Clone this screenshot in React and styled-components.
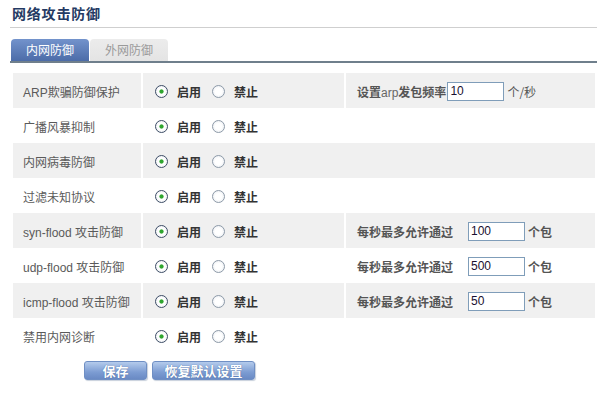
import React from "react";
import styled, {createGlobalStyle} from "styled-components";

const GlobalStyle = createGlobalStyle`
body {
    margin: 0;
    background: #fff;
    font-family: "Liberation Sans", "Noto Sans CJK SC", sans-serif;
    font-size: 12px;
}
`

const rows = [
    {label: "ARP欺骗防御保护", extra: {arp: true, value: "10", post: "个/秒"}},
    {label: "广播风暴抑制"},
    {label: "内网病毒防御"},
    {label: "过滤未知协议"},
    {label: "syn-flood 攻击防御", extra: {pre: "每秒最多允许通过", value: "100", post: "个包"}},
    {label: "udp-flood 攻击防御", extra: {pre: "每秒最多允许通过", value: "500", post: "个包"}},
    {label: "icmp-flood 攻击防御", extra: {pre: "每秒最多允许通过", value: "50", post: "个包"}},
    {label: "禁用内网诊断"}
];

const App = () => {

    const [tab, setTab] = React.useState(0);

    return (
        <React.Fragment>
            <GlobalStyle/>
            <Page>
                <Title>网络攻击防御</Title>
                <Tabs>
                    <Tab $active={tab === 0} onClick={() => setTab(0)}>内网防御</Tab>
                    <Tab $active={tab === 1} onClick={() => setTab(1)}>外网防御</Tab>
                </Tabs>
                <Table>
                    {
                        rows.map((row, i) => (
                            <Row key={i} $shaded={i % 2 === 0}>
                                <Cell>{row.label}</Cell>
                                <Cell $wide={!row.extra}>
                                    <Radio type="radio" name={"r" + i} defaultChecked/>
                                    <Choice>启用</Choice>
                                    <Radio type="radio" name={"r" + i}/>
                                    <Choice>禁止</Choice>
                                </Cell>
                                {
                                    row.extra
                                        ? <Cell>
                                                {
                                                    row.extra.arp
                                                        ? <Strong>设置<Thin>arp</Thin>发包频率</Strong>
                                                        : <Strong>{row.extra.pre}</Strong>
                                                }
                                                <Field $tight={row.extra.arp} defaultValue={row.extra.value}/>
                                                <Unit $light={row.extra.arp}>{row.extra.post}</Unit>
                                            </Cell>
                                        : null
                                }
                            </Row>
                        ))
                    }
                </Table>
                <Buttons>
                    <Button $w={63}>保存</Button>
                    <Button $w={103}>恢复默认设置</Button>
                </Buttons>
            </Page>
        </React.Fragment>
    )
}

const Page = styled.div `
width: 603px;
height: 396px;
padding: 5px 6px 0 10px;
box-sizing: border-box;
`
const Title = styled.h1 `
margin: 0;
padding: 0 0 6px 2px;
height: 16px;
line-height: 16px;
font-size: 14px;
letter-spacing: 0.8px;
font-weight: 700;
color: #243a63;
font-family: "Noto Sans CJK SC", sans-serif;
border-bottom: 1px solid #cfcfcf;
`
const Tabs = styled.div `
display: flex;
gap: 1px;
margin-top: 11px;
padding-left: 1px;
border-bottom: 2px solid #6f7f8c;
`
const Tab = styled.div `
width: 78px;
height: 22px;
line-height: 22px;
text-align: center;
font-size: 12px;
font-family: "Noto Sans CJK SC", sans-serif;
border-radius: 4px 4px 0 0;
cursor: pointer;
color: ${props => props.$active ? "#fff" : "#9a9a9a"};
background: ${props => props.$active
    ? "linear-gradient(#7393cc, #4c6ca8)"
    : "linear-gradient(#ececec, #e4e4e4)"};
`
const Table = styled.div `
margin: 10px 0 0 3px;
width: 582px;
`
const Row = styled.div `
display: grid;
grid-template-columns: 128px 201px 249px;
column-gap: 2px;
height: 35px;
> div {
    background: ${props => props.$shaded ? "#f0f0f0" : "#fff"};
}
`
const Cell = styled.div `
display: flex;
align-items: center;
padding: 1px 0 0 10px;
color: #5a5a5a;
font-family: "Liberation Sans", "Noto Sans CJK SC", sans-serif;
font-size: 12px;
grid-column: ${props => props.$wide ? "span 2" : "auto"};
&:nth-child(2) {padding-left: 12px;}
&:nth-child(3) {padding-left: 11px;}
`
const Radio = styled.input `
appearance: none;
margin: 0;
width: 13px;
height: 13px;
border-radius: 50%;
border: 1px solid #8d9aa8;
background: radial-gradient(circle, #fff 40%, #e3e7ed 100%);
box-sizing: border-box;
&:checked {
    border-color: #3d4d66;
    background: radial-gradient(circle, #2fa52f 0, #2fa52f 1.7px, #fff 2.5px, #fff 45%, #e3e7ed 100%);
}
`
const Choice = styled.span `
margin: 0 11px 0 9px;
font-weight: 700;
color: #333;
font-family: "Noto Sans CJK SC", sans-serif;
`
const Strong = styled.span `
font-weight: 700;
color: #555;
font-family: "Liberation Sans", "Noto Sans CJK SC", sans-serif;
`
const Thin = styled.span `
font-weight: 400;
color: #666;
`
const Field = styled.input `
width: 57px;
height: 19px;
box-sizing: border-box;
margin: 0 3px 0 ${props => props.$tight ? "1px" : "15px"};
padding: 0 2px;
border: 1px solid #7f9db9;
font-family: "Liberation Sans", sans-serif;
font-size: 12px;
color: #1a1030;
background: #fff;
outline: none;
`
const Unit = styled.span `
font-weight: ${props => props.$light ? 400 : 700};
color: #555;
font-family: "Noto Sans CJK SC", sans-serif;
`
const Buttons = styled.div `
display: flex;
gap: 5px;
margin: 8px 0 0 74px;
`
const Button = styled.button `
width: ${props => props.$w}px;
height: 19px;
padding: 0;
border: 1px solid #6f8fc4;
border-radius: 3px;
background: linear-gradient(#b4cbec, #7c9cd2 60%, #6a8ac4);
color: #fff;
font-weight: 700;
font-size: 13px;
font-family: "Noto Sans CJK SC", sans-serif;
line-height: 17px;
text-shadow: 0 0 1px #3a5a90;
box-shadow: 1px 1px 1px #c8d0dc;
`

export default App;
